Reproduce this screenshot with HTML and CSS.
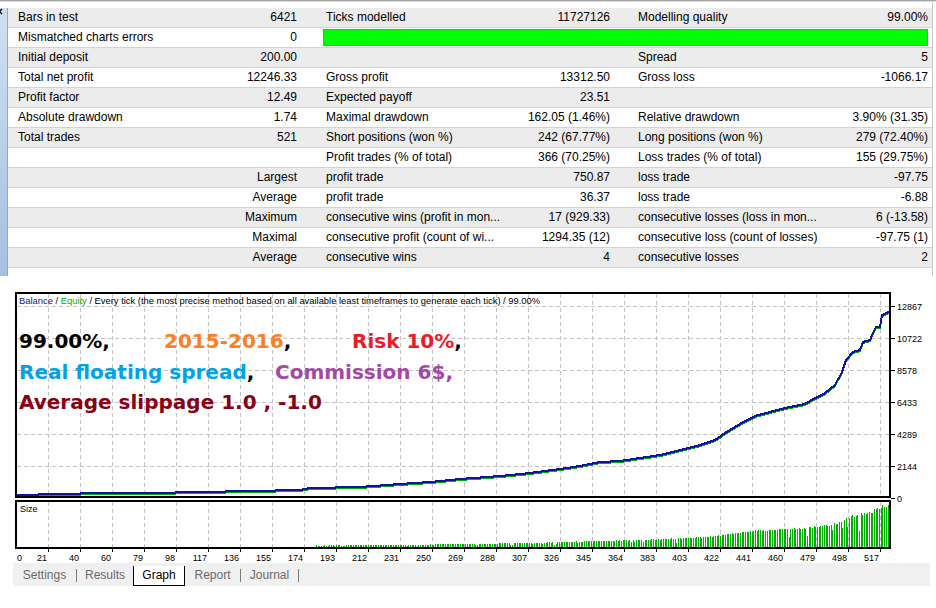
FILE: index.html
```html
<!DOCTYPE html>
<html lang="en">
<head>
    <meta charset="UTF-8">
    <meta name="viewport" content="width=device-width, initial-scale=1.0">
    <title>Strategy Tester - Graph</title>
    <link rel="stylesheet" href="styles.css">
</head>
<body>

<div class="topbar"></div>

<div class="report">
    <div class="side">
        <svg class="close-mark" width="7" height="8" viewBox="0 0 7 8">
            <path d="M-3 1 L2 6 M2 1 L-3 6" stroke="#000" stroke-width="1.4"/>
        </svg>
    </div>
    <div class="stats">
        <div class="row">
            <span>Bars in test</span><span>6421</span>
            <span>Ticks modelled</span><span>11727126</span>
            <span>Modelling quality</span><span>99.00%</span>
        </div>
        <div class="row">
            <span>Mismatched charts errors</span><span>0</span>
            <div class="quality"></div>
        </div>
        <div class="row">
            <span>Initial deposit</span><span>200.00</span>
            <span></span><span></span>
            <span>Spread</span><span>5</span>
        </div>
        <div class="row">
            <span>Total net profit</span><span>12246.33</span>
            <span>Gross profit</span><span>13312.50</span>
            <span>Gross loss</span><span>-1066.17</span>
        </div>
        <div class="row">
            <span>Profit factor</span><span>12.49</span>
            <span>Expected payoff</span><span>23.51</span>
            <span></span><span></span>
        </div>
        <div class="row">
            <span>Absolute drawdown</span><span>1.74</span>
            <span>Maximal drawdown</span><span>162.05 (1.46%)</span>
            <span>Relative drawdown</span><span>3.90% (31.35)</span>
        </div>
        <div class="row">
            <span>Total trades</span><span>521</span>
            <span>Short positions (won %)</span><span>242 (67.77%)</span>
            <span>Long positions (won %)</span><span>279 (72.40%)</span>
        </div>
        <div class="row">
            <span></span><span></span>
            <span>Profit trades (% of total)</span><span>366 (70.25%)</span>
            <span>Loss trades (% of total)</span><span>155 (29.75%)</span>
        </div>
        <div class="row">
            <span></span><span>Largest</span>
            <span>profit trade</span><span>750.87</span>
            <span>loss trade</span><span>-97.75</span>
        </div>
        <div class="row">
            <span></span><span>Average</span>
            <span>profit trade</span><span>36.37</span>
            <span>loss trade</span><span>-6.88</span>
        </div>
        <div class="row">
            <span></span><span>Maximum</span>
            <span>consecutive wins (profit in mon...</span><span>17 (929.33)</span>
            <span>consecutive losses (loss in mon...</span><span>6 (-13.58)</span>
        </div>
        <div class="row">
            <span></span><span>Maximal</span>
            <span>consecutive profit (count of wi...</span><span>1294.35 (12)</span>
            <span>consecutive loss (count of losses)</span><span>-97.75 (1)</span>
        </div>
        <div class="row">
            <span></span><span>Average</span>
            <span>consecutive wins</span><span>4</span>
            <span>consecutive losses</span><span>2</span>
        </div>
    </div>
</div>

<div class="chart">
    <svg id="graph" width="936" height="287" viewBox="0 276 936 287"></svg>

    <div class="legend">
        <span class="balance-name">Balance</span> / <span class="equity-name">Equity</span> / Every tick (the most precise method based on all available least timeframes to generate each tick) / 99.00%
    </div>

    <div class="notes">
        <div class="note-line">
            <span class="seg w145">99.00%,</span><span class="seg w188"><span class="orange">2015-2016</span>,</span><span class="seg"><span class="red">Risk 10%</span>,</span>
        </div>
        <div class="note-line">
            <span class="seg w256"><span class="blue">Real floating spread</span>,</span><span class="seg purple">Commission 6$,</span>
        </div>
        <div class="note-line">
            <span class="seg maroon">Average slippage 1.0 , -1.0</span>
        </div>
    </div>
</div>

<div class="tabs">
    <span class="tab settings">Settings</span>
    <span class="sep"></span>
    <span class="tab results">Results</span>
    <span class="tab graph active">Graph</span>
    <span class="tab report-tab">Report</span>
    <span class="sep"></span>
    <span class="tab journal">Journal</span>
    <span class="sep"></span>
</div>

<script src="script.js"></script>
</body>
</html>
```

FILE: styles.css
```css
body {
    margin: 0;
    width: 936px;
    height: 608px;
    overflow: hidden;
    background-color: #fff;
    font-family: "Liberation Sans", Arial, sans-serif;
    font-size: 12px;
    color: #000;
}

.topbar {
    height: 1px;
    border-top: 1px solid #a3a3a3;
    background-color: #dedede;
}

/* results table */
.report {
    display: flex;
    height: 274px;
}

.side {
    position: relative;
    width: 7px;
    margin-top: 6px;
    border-right: 1px solid #8ea9cc;
    background: linear-gradient(to bottom, #cfe0f2, #a4c0e3);
    overflow: hidden;
}

.close-mark {
    display: block;
}

.stats {
    width: 924px;
    padding-top: 6px;
    border-right: 1px solid #c6c6c6;
}

.row {
    display: grid;
    grid-template-columns: 192px 116px 204px 108px 192px 112px;
    height: 19px;
    line-height: 19px;
    border-bottom: 1px solid #d3d3d3;
    background-color: #fff;
}

.row:nth-child(odd) {
    background-color: #ececec;
}

.row span {
    white-space: nowrap;
    overflow: hidden;
}

.row span:nth-child(odd) {
    padding-left: 10px;
}

.row span:nth-child(even) {
    text-align: right;
}

.row span:nth-child(2) {
    padding-right: 19px;
}

.row span:nth-child(4) {
    padding-right: 18px;
}

.row span:nth-child(6) {
    padding-right: 4px;
}

.quality {
    grid-column: 3 / 7;
    margin: 1px 4px 1px 7px;
    background-color: #00ff00;
    border: 1px solid #4d8fdc;
}

/* graph */
.chart {
    position: relative;
    height: 287px;
}

.chart svg {
    display: block;
}

.grid {
    stroke: #c4c4c4;
    stroke-width: 1;
    stroke-dasharray: 4 3;
}

.frame {
    fill: none;
    stroke: #000;
    stroke-width: 2;
}

.tick {
    stroke: #000;
    stroke-width: 1;
}

.axis {
    font-family: "Liberation Sans", Arial, sans-serif;
    font-size: 9px;
    fill: #000;
}

.balance {
    fill: none;
    stroke: #1212a0;
    stroke-width: 2;
    shape-rendering: crispEdges;
}

.equity {
    fill: none;
    stroke: #00b000;
    stroke-width: 1;
    shape-rendering: crispEdges;
}

.lots {
    fill: #00b000;
}

.legend {
    position: absolute;
    left: 19px;
    top: 19px;
    font-size: 9.4px;
    line-height: 11px;
    white-space: nowrap;
}

.balance-name {
    color: #1212a0;
}

.equity-name {
    color: #00b000;
}

.notes {
    position: absolute;
    left: 19px;
    top: 50px;
    font-family: "DejaVu Sans", sans-serif;
    font-weight: bold;
    font-size: 20px;
    line-height: 30.5px;
    white-space: nowrap;
}

.seg {
    display: inline-block;
}

.w145 { width: 145px; }
.w188 { width: 188px; }
.w256 { width: 256px; }

.orange { color: #ff7f27; }
.red { color: #ed1c24; }
.blue { color: #00a2e8; }
.purple { color: #a349a4; }
.maroon { color: #880015; }

/* bottom tabs */
.tabs {
    display: flex;
    width: 917px;
    height: 23px;
    margin-left: 13px;
    background-color: #f0f0f0;
}

.tab {
    box-sizing: border-box;
    padding-top: 2px;
    line-height: 21px;
    text-align: center;
    color: #6a6a6a;
}

.settings { width: 63px; }
.results { width: 56px; }
.report-tab { width: 55px; }
.journal { width: 57px; }

.tab.active {
    width: 52px;
    height: 20px;
    margin-top: 3px;
    padding-top: 0;
    line-height: 19px;
    background-color: #fff;
    border: 1px solid #000;
    border-top: none;
    color: #000;
}

.sep {
    width: 1px;
    height: 13px;
    margin-top: 6px;
    background-color: #7a7a7a;
}
```

FILE: script.js
```js
var NS = 'http://www.w3.org/2000/svg';
var svg = document.getElementById('graph');

function add(tag, attrs) {
    var el = document.createElementNS(NS, tag);
    for (var key in attrs) {
        el.setAttribute(key, attrs[key]);
    }
    svg.appendChild(el);
    return el;
}

// balance curve read off the tester chart, in page pixels
var balance = [
    [16, 495], [60, 494], [100, 493], [150, 493], [200, 492], [250, 491],
    [300, 490], [310, 488], [360, 487], [400, 484], [430, 482], [460, 479],
    [500, 476], [530, 473], [560, 469], [580, 466], [600, 462], [620, 461],
    [640, 458], [660, 455], [680, 450], [700, 445], [715, 440], [725, 433],
    [735, 427], [745, 421], [755, 416], [770, 412], [785, 408], [795, 406],
    [805, 404], [815, 398], [825, 393], [835, 385], [842, 372], [846, 360],
    [853, 352], [860, 350], [863, 342], [870, 340], [873, 333], [876, 327],
    [880, 327], [882, 315], [889, 312]
];

function balanceAt(x) {
    for (var i = 1; i < balance.length; i++) {
        if (x <= balance[i][0]) {
            var a = balance[i - 1];
            var b = balance[i];
            return a[1] + (b[1] - a[1]) * (x - a[0]) / (b[0] - a[0]);
        }
    }
    return balance[balance.length - 1][1];
}

var seed = 11;
function rnd() {
    seed = (seed * 9301 + 49297) % 233280;
    return seed / 233280;
}

// dashed grid
for (var gx = 48; gx <= 880; gx += 32) {
    add('line', { x1: gx + 0.5, y1: 294, x2: gx + 0.5, y2: 497, 'class': 'grid' });
    add('line', { x1: gx + 0.5, y1: 502, x2: gx + 0.5, y2: 547, 'class': 'grid' });
}

var yLabels = ['0', '2144', '4289', '6433', '8578', '10722', '12867'];
for (var k = 1; k < yLabels.length; k++) {
    var gy = 498 - 32 * k;
    add('line', { x1: 17, y1: gy + 0.5, x2: 890, y2: gy + 0.5, 'class': 'grid' });
}

// lot size bars
for (var t = 0; t < 521; t++) {
    var bx = Math.round(16 + t * 1.676);
    if (bx < 316) continue;
    var rise = 498 - balanceAt(bx);
    var f = rnd() < 0.07 ? 0.45 + rnd() * 0.3 : 0.92 + rnd() * 0.08;
    var h = Math.round(43 * Math.pow(rise / 186, 1.15) * f);
    if (h < 1) continue;
    add('rect', { x: bx, y: 547 - h, width: 1, height: h, 'class': 'lots', 'shape-rendering': 'crispEdges' });
}

// equity and balance lines
var pts = [];
var eq = [];
for (var x = 16; x <= 889; x++) {
    var y = Math.round(balanceAt(x));
    pts.push(x + ',' + y);
    eq.push(x + ',' + (y + 1.5));
}
add('polyline', { points: eq.join(' '), 'class': 'equity' });
add('polyline', { points: pts.join(' '), 'class': 'balance' });

// frames
add('rect', { x: 16, y: 293, width: 874, height: 204, 'class': 'frame' });
add('rect', { x: 16, y: 501, width: 874, height: 47, 'class': 'frame' });

// price scale
for (var j = 0; j < yLabels.length; j++) {
    var ly = 498 - 32 * j;
    add('line', { x1: 891, y1: ly + 0.5, x2: 895, y2: ly + 0.5, 'class': 'tick' });
    add('text', { x: 897, y: ly + 3.5, 'class': 'axis' }).textContent = yLabels[j];
}

// trade numbers
var xLabels = ['0', '21', '40', '60', '79', '98', '117', '136', '155', '174', '193', '212',
    '231', '250', '269', '288', '307', '326', '345', '364', '383', '403', '422', '441',
    '460', '479', '498', '517'];
for (var n = 0; n < xLabels.length; n++) {
    if (n === 0) {
        add('text', { x: 17, y: 561, 'class': 'axis' }).textContent = xLabels[n];
        continue;
    }
    var tx = 48 + 32 * (n - 1);
    add('line', { x1: tx + 0.5, y1: 549, x2: tx + 0.5, y2: 552, 'class': 'tick' });
    add('text', { x: tx - 1, y: 561, 'class': 'axis', 'text-anchor': 'end' }).textContent = xLabels[n];
}

add('text', { x: 20, y: 512, 'class': 'axis' }).textContent = 'Size';
```
